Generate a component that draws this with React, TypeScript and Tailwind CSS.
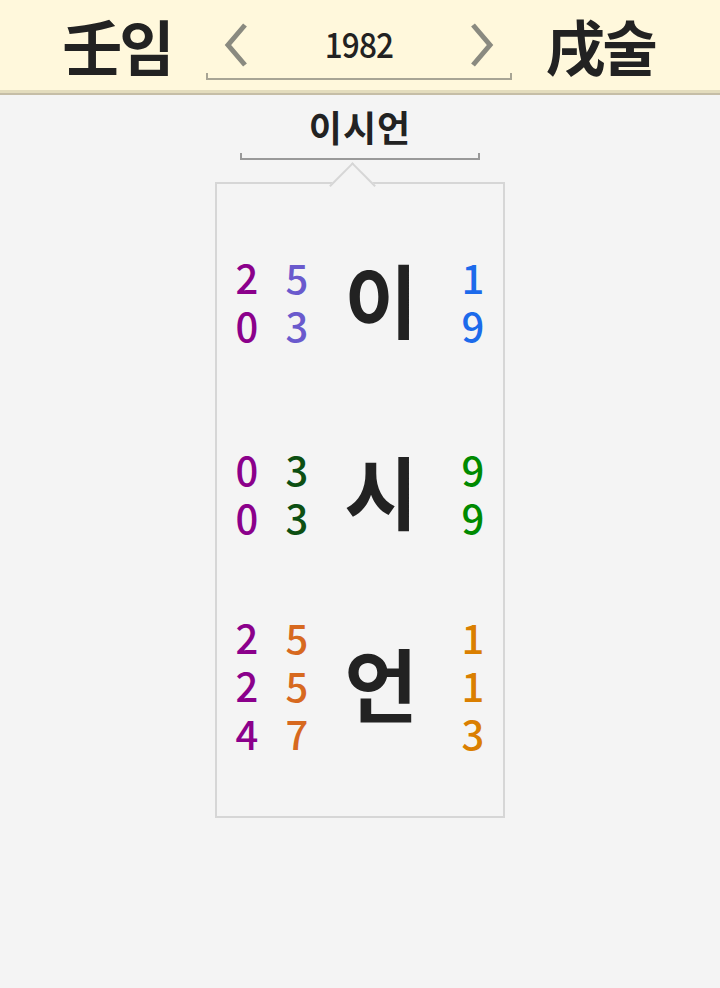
import React from "react";

const F = { fontFamily: '"Noto Sans CJK KR", "Noto Sans", sans-serif' };

type Row = { ch: string; a: string[]; b: string[]; c: string[]; bc: string; cc: string };

const rows: Row[] = [
  { ch: "이", a: ["2", "0"], b: ["5", "3"], c: ["1", "9"], bc: "text-[#6a5acd]", cc: "text-[#1c6aeb]" },
  { ch: "시", a: ["0", "0"], b: ["3", "3"], c: ["9", "9"], bc: "text-[#0d4f12]", cc: "text-[#008a00]" },
  { ch: "언", a: ["2", "2", "4"], b: ["5", "5", "7"], c: ["1", "1", "3"], bc: "text-[#d7691f]", cc: "text-[#da7f00]" },
];

function Col({ items, cls }: { items: string[]; cls: string }) {
  return (
    <div className={`flex w-10 flex-col items-center text-[40px] font-medium leading-[48px] ${cls}`}>
      {items.map((d, i) => (
        <span key={i} className="block h-[48px]">{d}</span>
      ))}
    </div>
  );
}

function Chevron({ dir }: { dir: "l" | "r" }) {
  return (
    <svg width="26" height="44" viewBox="0 0 26 44">
      <polyline
        points={dir === "l" ? "22,2 5,22 22,42" : "4,2 21,22 4,42"}
        fill="none"
        stroke="#8a8a80"
        strokeWidth="5"
      />
    </svg>
  );
}

export default function App() {
  return (
    <div className="min-h-[988px] w-[720px] bg-[#f4f4f4] text-[#222]" style={F}>
      <header className="flex h-[95px] items-center justify-center gap-[34px] border-b-2 border-[#c5bda6] bg-[#fff8dc] pr-[3px] shadow-[inset_0_-3px_0_#e3dcbd]">
        <div className="text-[60px] font-bold leading-none tracking-[-3px] mt-[-4px]">壬임</div>
        <div className="relative flex h-[70px] w-[306px] items-center justify-between px-[17px] mt-[-4px]">
          <Chevron dir="l" />
          <span className="text-[35px] font-medium leading-none tracking-[-1px] mt-[-4px] scale-x-90 inline-block">1982</span>
          <Chevron dir="r" />
          <div className="absolute bottom-0 left-0 right-0 h-[7px] border-x-2 border-b-2 border-[#a8a595]" />
        </div>
        <div className="text-[60px] font-bold leading-none tracking-[-3px] mt-[-4px]">戌술</div>
      </header>

      <div className="flex flex-col items-center">
        <div className="mt-[7px] text-[36px] font-bold leading-[48px] tracking-[1px]">이시언</div>
        <div className="mt-[3px] h-[7px] w-[240px] border-x-2 border-b-2 border-[#999]" />
        <div className="relative mt-[22px] w-[290px] border-2 border-[#d6d6d6] bg-[#f4f4f4] pb-[35px] pt-[21px]">
          <div className="absolute left-[119px] top-[-15px] h-[33px] w-[33px] rotate-45 border-l-2 border-t-2 border-[#d6d6d6] bg-[#f4f4f4]" />
          {rows.map((r, i) => (
            <div key={i} className="relative flex h-[192px] items-center pl-[10px]">
              <Col items={r.a} cls="text-[#8b008b]" />
              <div className="w-[10px]" />
              <Col items={r.b} cls={r.bc} />
              <div className="flex w-[114px] justify-center pl-[14px] text-[80px] font-bold leading-none mt-[-8px]">
                {r.ch}
              </div>
              <div className="w-[22px]" />
              <Col items={r.c} cls={r.cc} />
            </div>
          ))}
        </div>
      </div>
    </div>
  );
}
